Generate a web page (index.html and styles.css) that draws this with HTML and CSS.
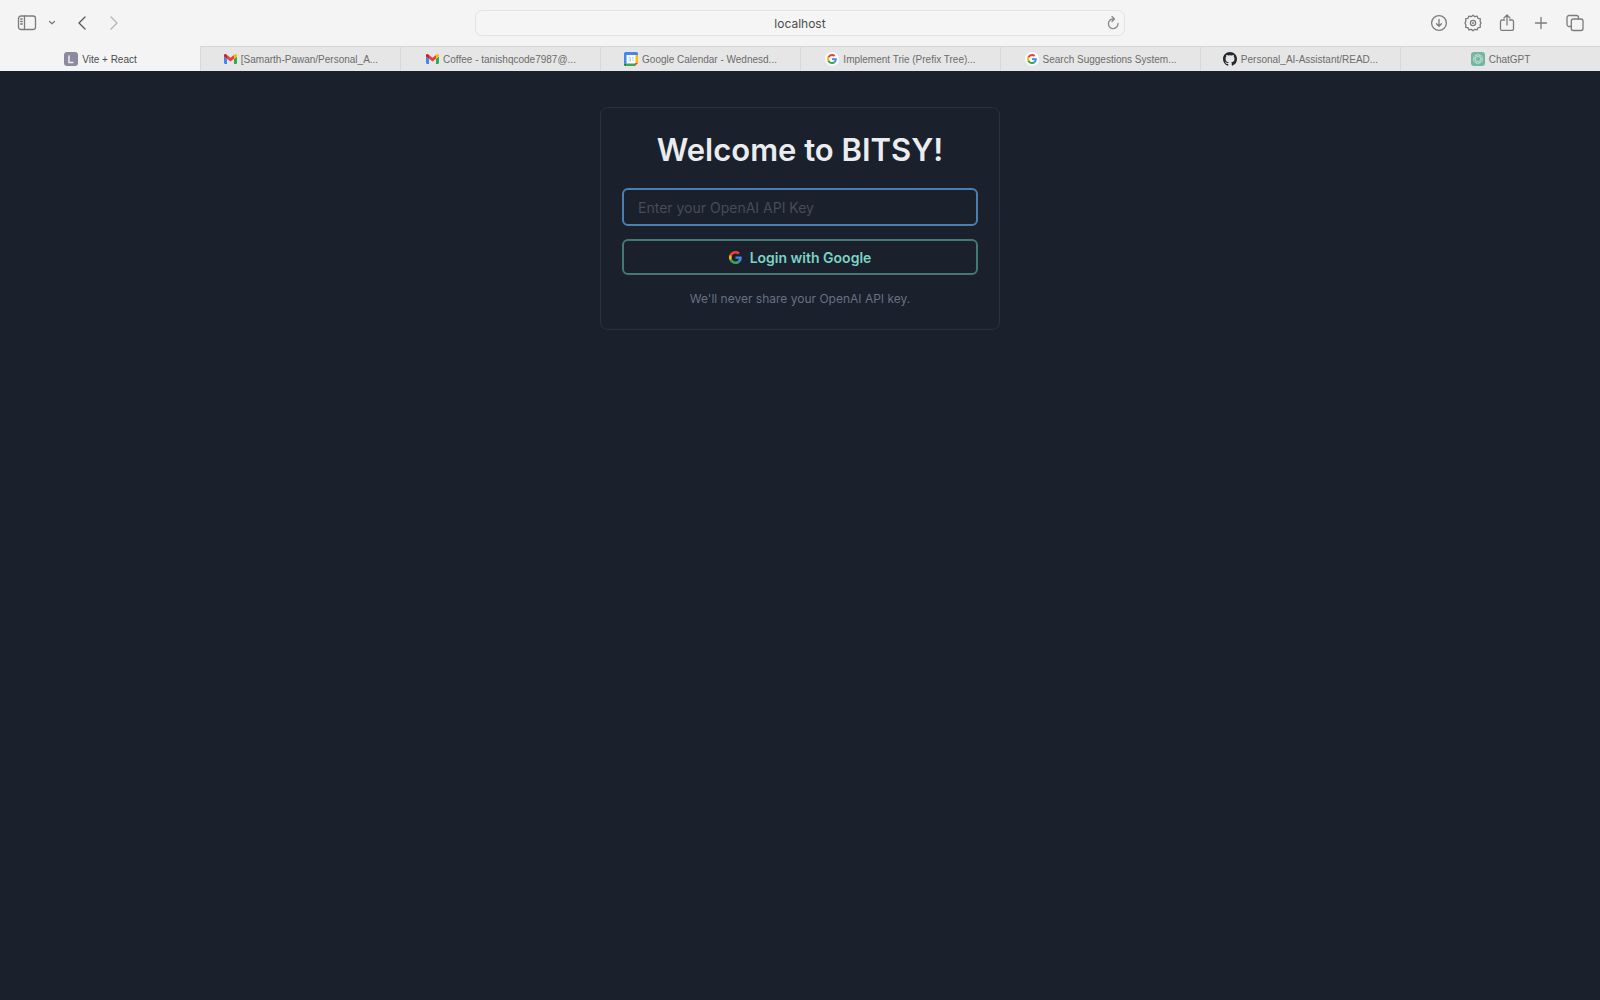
FILE: index.html
```html
<!DOCTYPE html>
<html lang="en">
<head>
<meta charset="utf-8">
<title>Vite + React</title>
<link rel="stylesheet" href="styles.css">
</head>
<body>
<svg class="defs" aria-hidden="true">
  <symbol id="google" viewBox="0 0 48 48">
    <path fill="#ea4335" d="M24 9.500c3.500 0 6.700 1.200 9.200 3.600l6.900-6.900C35.900 2.400 30.500 0 24 0 14.600 0 6.500 5.400 2.600 13.200l8 6.200C12.400 13.700 17.700 9.500 24 9.500z"/>
    <path fill="#4285f4" d="M47 24.500c0-1.600-.2-3.100-.4-4.500H24v9h12.900c-.6 3-2.200 5.500-4.700 7.200l7.700 6C44.400 38 47 31.800 47 24.500z"/>
    <path fill="#fbbc05" d="M10.500 28.600c-.5-1.500-.8-3-.8-4.600s.3-3.100.8-4.600l-8-6.200C.9 16.500 0 20.100 0 24s.9 7.500 2.600 10.800l7.900-6.200z"/>
    <path fill="#34a853" d="M24 48c6.500 0 11.900-2.100 15.900-5.800l-7.700-6c-2.200 1.400-4.900 2.300-8.200 2.300-6.300 0-11.600-4.200-13.500-9.900l-8 6.200C6.500 42.600 14.600 48 24 48z"/>
  </symbol>
  <symbol id="gmail" viewBox="0 0 24 18">
    <path fill="#4285f4" d="M1.600 18H5.500V8.700L0 4.600v11.800C0 17.300.7 18 1.600 18z"/>
    <path fill="#34a853" d="M18.500 18h3.900c.9 0 1.600-.7 1.600-1.600V4.600l-5.500 4.100z"/>
    <path fill="#fbbc04" d="M18.500 1.600v7.100L24 4.600V2.400c0-2-2.300-3.200-3.900-2z"/>
    <path fill="#ea4335" d="M5.500 8.700V1.600L12 6.500l6.500-4.900v7.100L12 13.600z"/>
    <path fill="#c5221f" d="M0 2.400v2.200l5.500 4.100V1.600L3.900.4C2.300-.8 0 .4 0 2.400z"/>
  </symbol>
</svg>

<header class="browser">
  <div class="toolbar">
    <div class="group">
      <button class="tool sidebar" aria-label="Show sidebar"><svg width="20" height="18" viewBox="0 0 20 18"><rect x="1.500" y="2" width="17" height="13.500" rx="2.500"/><path d="M7.500 2v13.500M3.700 5h1.600M3.700 7.500h1.600M3.700 10h1.600"/></svg></button>
      <button class="tool chevron" aria-label="Tab groups"><svg width="8" height="6" viewBox="0 0 8 6"><path d="M1.500 1.500L4 3.700l2.500-2.200"/></svg></button>
      <button class="tool back" aria-label="Back"><svg width="10" height="16" viewBox="0 0 10 16"><path d="M8 2L2 8l6 6"/></svg></button>
      <button class="tool forward" aria-label="Forward"><svg width="10" height="16" viewBox="0 0 10 16"><path d="M2 2l6 6-6 6"/></svg></button>
    </div>
    <div class="address">
      <input class="address-input" type="text" value="localhost" aria-label="Address">
      <button class="tool reload" aria-label="Reload"><svg width="14" height="14" viewBox="0 0 14 14"><path d="M7.500 3A4.800 4.800 0 1 0 12 7.500M6 .5L8.500 3 6 5.500"/></svg></button>
    </div>
    <div class="group actions">
      <button class="tool" aria-label="Downloads"><svg width="18" height="18" viewBox="0 0 18 18"><circle cx="9" cy="9" r="7.400"/><path d="M9 5.500v6.500M6.500 9.700L9 12.200l2.500-2.500"/></svg></button>
      <button class="tool" aria-label="Settings"><svg width="18" height="18" viewBox="0 0 18 18"><path d="M9 1.200l1.800 1.500 2.300-.6.900 2.200 2.300.4-.2 2.400L17 9l-.9 1.900.2 2.400-2.300.4-.9 2.200-2.300-.6L9 16.800l-1.800-1.500-2.300.6-.9-2.200-2.300-.4.200-2.400L1 9l.9-1.900-.2-2.400L4 4.300l.9-2.200 2.300.6z"/><circle cx="9" cy="9" r="2.600"/><circle cx="9" cy="9" r=".4"/></svg></button>
      <button class="tool" aria-label="Share"><svg width="18" height="18" viewBox="0 0 18 18"><path d="M6.500 6H4a1.500 1.500 0 0 0-1.500 1.500v7.400A1.500 1.500 0 0 0 4 16.400h10a1.500 1.500 0 0 0 1.500-1.500V7.500A1.500 1.500 0 0 0 14 6h-2.500M9 11V1.500M6 4l3-3 3 3"/></svg></button>
      <button class="tool" aria-label="New tab"><svg width="18" height="18" viewBox="0 0 18 18"><path d="M9 3.500v11M3.500 9h11"/></svg></button>
      <button class="tool" aria-label="Tab overview"><svg width="18" height="18" viewBox="0 0 18 18"><rect x="5.300" y="5" width="11.700" height="11.500" rx="2"/><path d="M5.300 12.500H3a2 2 0 0 1-2-2V3.500a2 2 0 0 1 2-2h7.500a2 2 0 0 1 2 2V5"/></svg></button>
    </div>
  </div>
  <nav class="tabs" aria-label="Open tabs">
    <button class="tab active"><svg class="favicon" viewBox="0 0 14 14"><rect width="14" height="14" rx="3" fill="#8d8a9d"/><path d="M5 3.500v7h4.500" fill="none" stroke="#eeedf3" stroke-width="1.500"/></svg><span>Vite + React</span></button>
    <button class="tab"><svg class="favicon"><use href="#gmail" x="1" y="2" width="13" height="10"/></svg><span>[Samarth-Pawan/Personal_A...</span></button>
    <button class="tab"><svg class="favicon"><use href="#gmail" x="1" y="2" width="13" height="10"/></svg><span>Coffee - tanishqcode7987@...</span></button>
    <button class="tab"><svg class="favicon" viewBox="0 0 14 14"><path fill="#fff" d="M2 2h10v10H2z"/><path fill="#4285f4" d="M1.500 0h11A1.500 1.500 0 0 1 14 1.500V3H2.500v8.500H0v-10A1.500 1.500 0 0 1 1.500 0z"/><path fill="#fbbc04" d="M11.500 3H14v8h-2.500z"/><path fill="#34a853" d="M2.500 11.500H11V14H2.500z"/><path fill="#188038" d="M0 11.500h2.500V14h-1A1.500 1.500 0 0 1 0 12.500z"/><path fill="#ea4335" d="M11 11h3l-3 3z"/><path d="M4.500 5.500h2v3.500h-2M4.700 7.200h1.800M8 5.800l1-.5V9" fill="none" stroke="#a3c3f9" stroke-width=".8"/></svg><span>Google Calendar - Wednesd...</span></button>
    <button class="tab"><svg class="favicon" viewBox="0 0 14 14"><circle cx="7" cy="7" r="7" fill="#fff"/><use href="#google" x="2" y="2" width="10" height="10"/></svg><span>Implement Trie (Prefix Tree)...</span></button>
    <button class="tab"><svg class="favicon" viewBox="0 0 14 14"><circle cx="7" cy="7" r="7" fill="#fff"/><use href="#google" x="2" y="2" width="10" height="10"/></svg><span>Search Suggestions System...</span></button>
    <button class="tab"><svg class="favicon" viewBox="0 0 16 16"><path fill="#24292f" d="M8 0C3.580 0 0 3.580 0 8c0 3.540 2.290 6.530 5.470 7.590.4.070.55-.17.55-.38 0-.19-.01-.82-.01-1.490-2.010.37-2.530-.49-2.690-.94-.09-.23-.48-.94-.82-1.130-.28-.15-.68-.52-.01-.53.63-.01 1.080.58 1.230.82.72 1.210 1.870.87 2.330.66.070-.52.280-.87.510-1.070-1.780-.2-3.640-.89-3.640-3.950 0-.87.31-1.590.82-2.150-.08-.2-.36-1.020.08-2.120 0 0 .67-.21 2.200.82a7.400 7.400 0 0 1 4 0c1.530-1.040 2.200-.82 2.200-.82.44 1.100.16 1.920.08 2.120.51.56.82 1.270.82 2.150 0 3.070-1.870 3.750-3.650 3.950.29.25.54.73.54 1.480 0 1.070-.01 1.930-.01 2.200 0 .21.15.46.55.38A8 8 0 0 0 16 8c0-4.420-3.580-8-8-8z"/></svg><span>Personal_AI-Assistant/READ...</span></button>
    <button class="tab"><svg class="favicon" viewBox="0 0 14 14"><rect width="14" height="14" rx="3" fill="#74b5a0"/><g fill="none" stroke="#c4e4d9" stroke-width=".7"><rect x="4.700" y="2.200" width="4.600" height="9.600" rx="2.300"/><rect x="4.700" y="2.200" width="4.600" height="9.600" rx="2.300" transform="rotate(60 7 7)"/><rect x="4.700" y="2.200" width="4.600" height="9.600" rx="2.300" transform="rotate(120 7 7)"/></g></svg><span>ChatGPT</span></button>
  </nav>
</header>

<main class="page">
  <form class="card">
    <h1 class="title">Welcome to BITSY!</h1>
    <input class="key" type="text" placeholder="Enter your OpenAI API Key" aria-label="OpenAI API Key">
    <button class="login" type="button"><svg width="13" height="13"><use href="#google" width="13" height="13"/></svg>Login with Google</button>
    <p class="note">We'll never share your OpenAI API key.</p>
  </form>
</main>
</body>
</html>
```
FILE: styles.css
```css
* {
  box-sizing: border-box;
}

body {
  margin: 0;
  min-height: 100vh;
  background: #1a202c;
  font-family: Inter, "Liberation Sans", sans-serif;
}

button,
input {
  margin: 0;
  font-family: inherit;
}

.defs {
  position: absolute;
  width: 0;
  height: 0;
}

.browser {
  background: #f4f4f4;
}

.toolbar {
  display: grid;
  grid-template-columns: 1fr minmax(0, 650px) 1fr;
  align-items: center;
  height: 46px;
  padding: 0 16px;
}

.group {
  display: flex;
  align-items: center;
}

.actions {
  justify-content: flex-end;
  gap: 16px;
}

.tool {
  display: flex;
  padding: 0;
  border: 0;
  background: none;
  color: #7c7c7c;
}

.tool svg {
  fill: none;
  stroke: currentColor;
  stroke-width: 1.3;
  stroke-linecap: round;
  stroke-linejoin: round;
}

.sidebar {
  margin-left: 1px;
}

.chevron {
  margin-left: 11px;
}

.back {
  margin-left: 21px;
  color: #555;
}

.forward {
  margin-left: 22px;
  color: #b4b4b4;
}

.address {
  display: flex;
  align-items: center;
  height: 26px;
  padding: 0 4px 0 18px;
  border: 1px solid #e3e3e3;
  border-radius: 7px;
  background: #f5f5f5;
}

.address-input {
  flex: 1;
  min-width: 0;
  padding: 0;
  border: 0;
  outline: 0;
  background: none;
  color: #4c4c4c;
  font-size: 12px;
  text-align: center;
}

.reload {
  color: #8a8a8a;
}

.tabs {
  display: grid;
  grid-template-columns: repeat(8, minmax(0, 1fr));
  height: 25px;
}

.tab {
  display: flex;
  align-items: center;
  justify-content: center;
  gap: 4px;
  min-width: 0;
  padding: 0;
  border: 0;
  border-top: 1px solid #d4d4d4;
  border-left: 1px solid #d9d9d9;
  background: #e6e6e6;
  color: #6c6c6c;
  font-family: "Liberation Sans", Arial, sans-serif;
  font-size: 10px;
  white-space: nowrap;
}

.tab.active {
  border-color: #f4f4f4;
  background: #f4f4f4;
  color: #4c4c4c;
}

.favicon {
  flex: none;
  width: 14px;
  height: 14px;
}

.page {
  padding: 36px 16px;
}

.card {
  display: flex;
  flex-direction: column;
  max-width: 400px;
  margin: 0 auto;
  padding: 20px 21px;
  border: 1px solid #2b313d;
  border-radius: 8px;
}

.title {
  margin: 0 0 17px;
  color: #ebecee;
  font-size: 31px;
  font-weight: 600;
  line-height: 43px;
  text-align: center;
}

.key {
  height: 38px;
  margin-bottom: 13px;
  padding: 0 14px;
  border: 2px solid #4a7faf;
  border-radius: 6px;
  outline: 0;
  background: transparent;
  color: #ebecee;
  font-size: 14px;
}

.key::placeholder {
  color: #474c58;
  opacity: 1;
}

.login {
  display: flex;
  align-items: center;
  justify-content: center;
  gap: 8px;
  height: 36px;
  padding: 0;
  border: 2px solid #437873;
  border-radius: 6px;
  background: transparent;
  color: #7bd3c4;
  font-size: 14px;
  font-weight: 600;
}

.note {
  margin: 14px 0 0;
  color: #687083;
  font-size: 12px;
  line-height: 20px;
  text-align: center;
}
```
